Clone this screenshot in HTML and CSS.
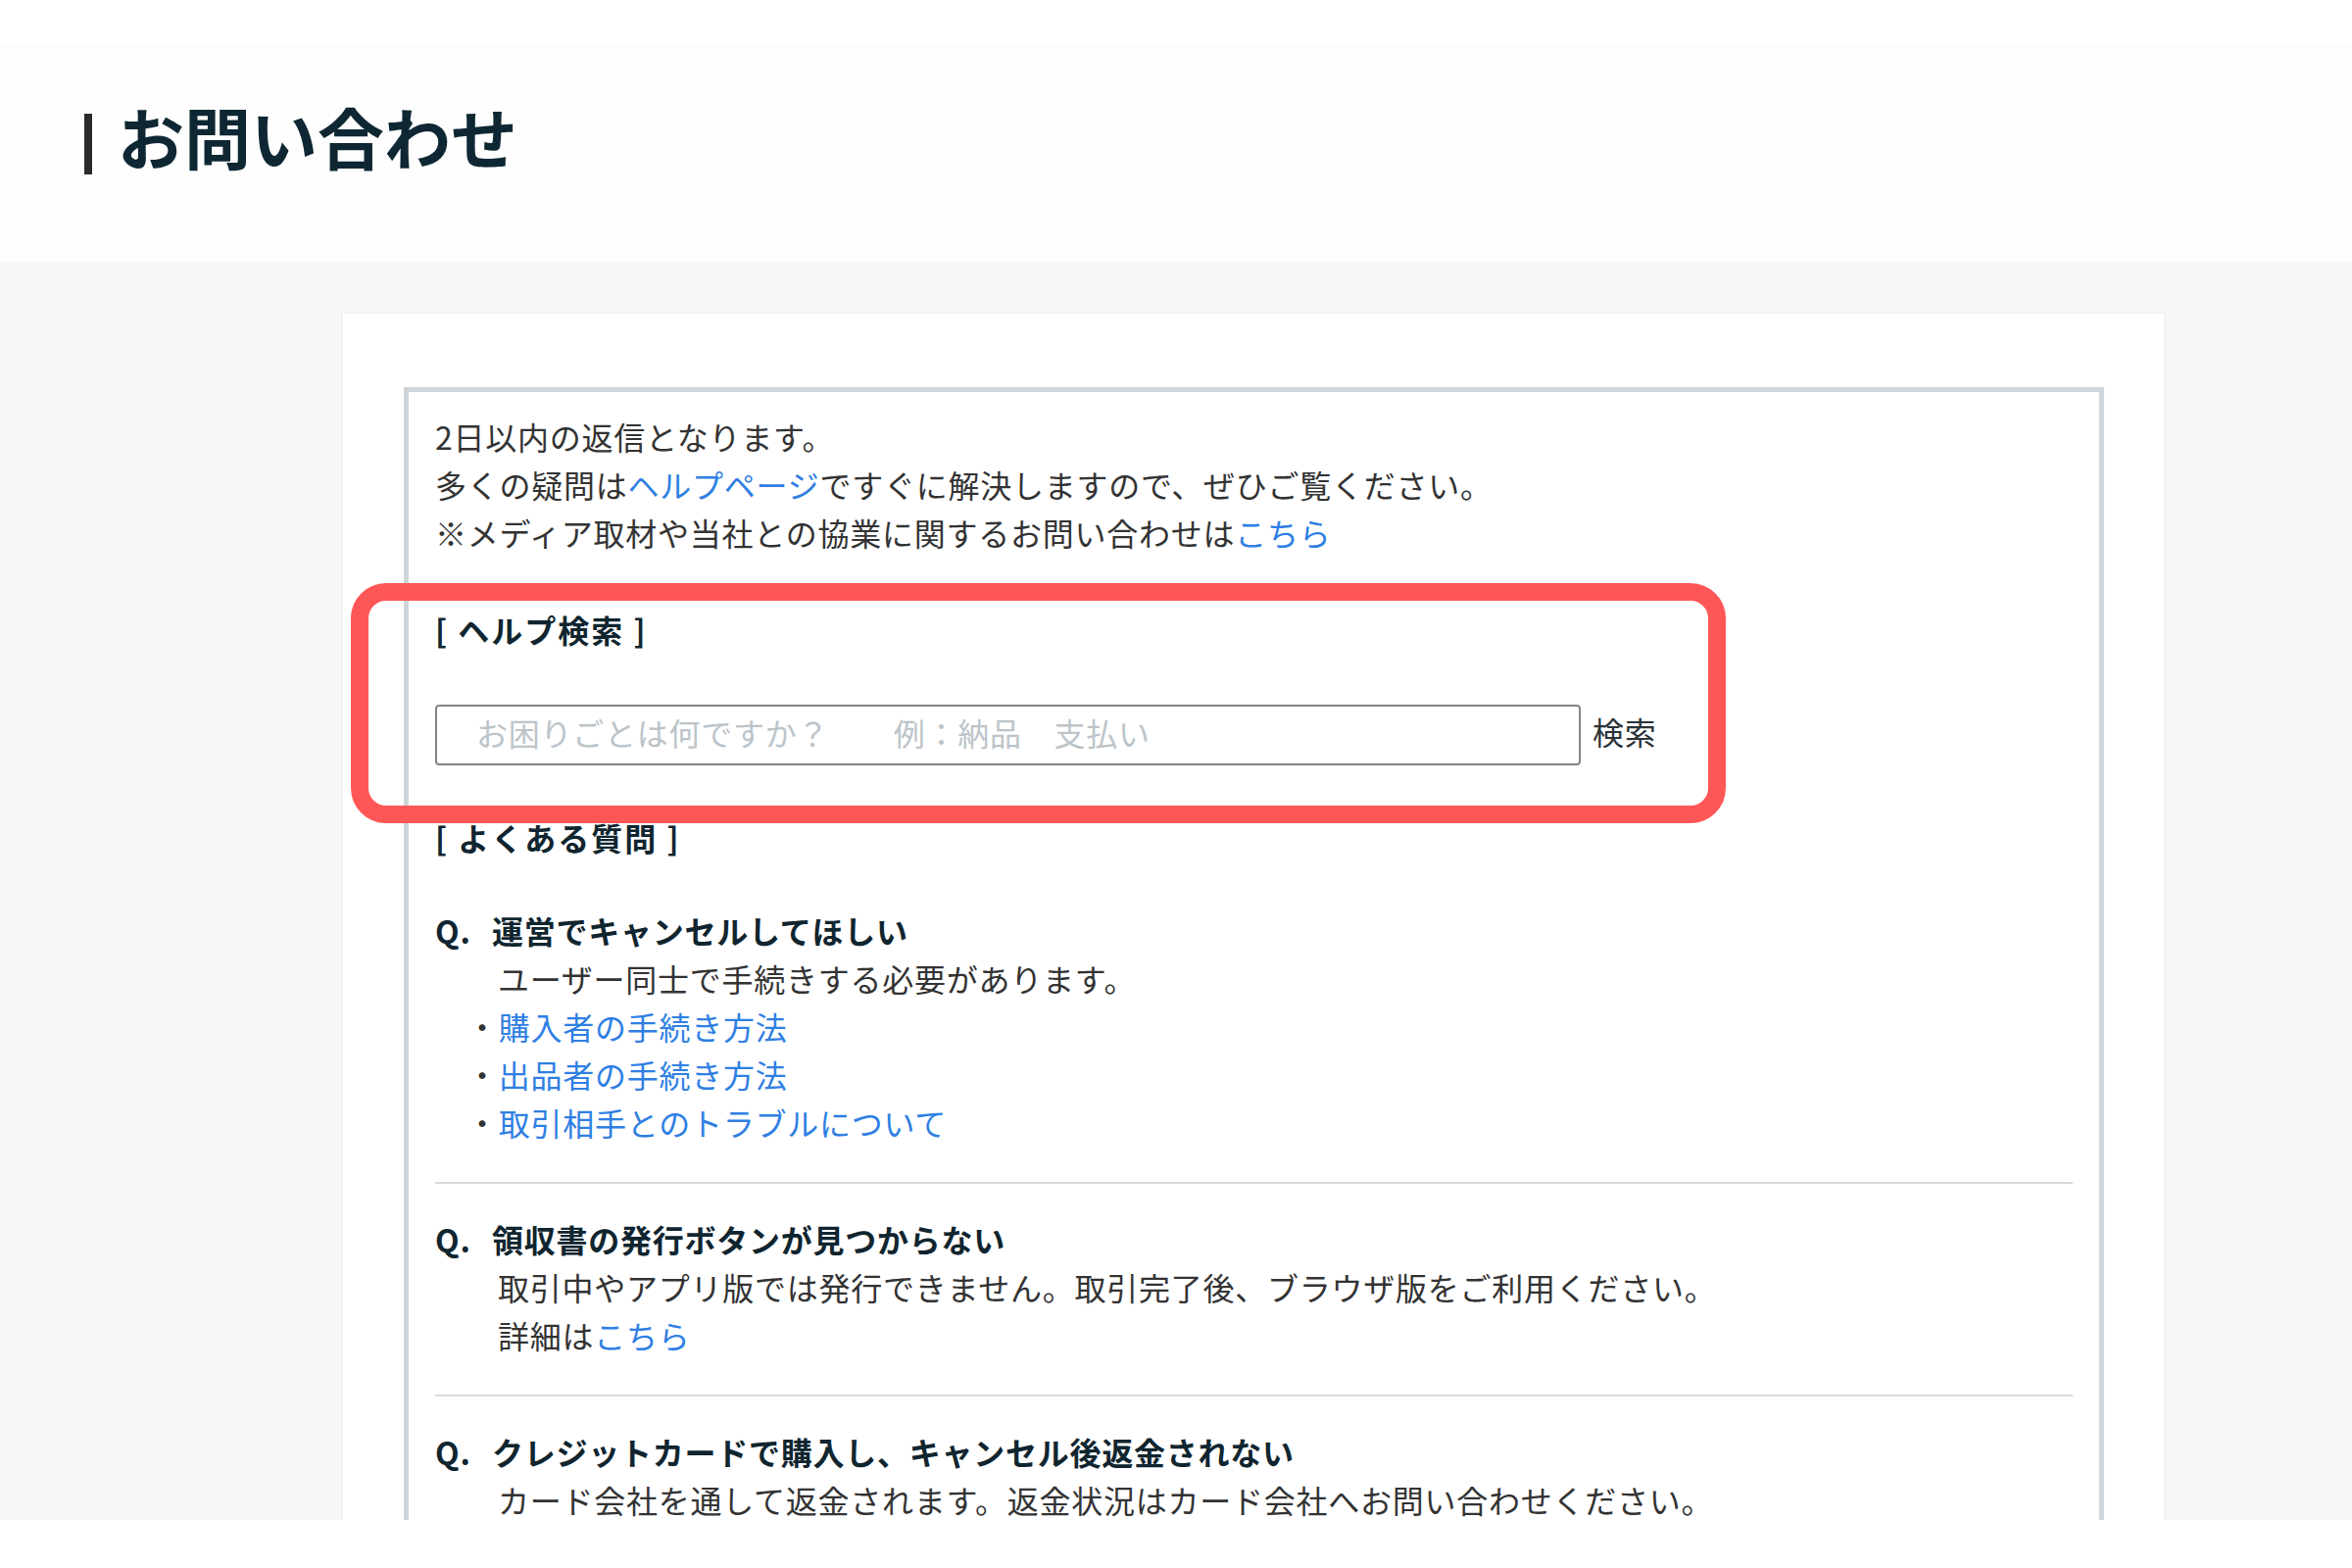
FILE: index.html
```html
<!DOCTYPE html>
<html lang="ja">
<head>
<meta charset="utf-8">
<title>お問い合わせ</title>
<link rel="stylesheet" href="styles.css">
</head>
<body>
<div class="topbar"></div>
<header class="page-header">
  <h1 class="page-title">お問い合わせ</h1>
</header>
<main class="main">
  <section class="card">
    <div class="panel">
      <p class="intro">2日以内の返信となります。<br>多くの疑問は<a href="#">ヘルプページ</a>ですぐに解決しますので、ぜひご覧ください。<br>※メディア取材や当社との協業に関するお問い合わせは<a href="#">こちら</a></p>

      <div class="help-search">
        <h2 class="section-title">[ ヘルプ検索 ]</h2>
        <form class="search-form">
          <input class="search-input" type="text" placeholder="お困りごとは何ですか？　　例：納品　支払い">
          <button class="search-btn" type="button">検索</button>
        </form>
        <div class="highlight"></div>
      </div>

      <h2 class="section-title faq-title">[ よくある質問 ]</h2>
      <div class="faq">
        <div class="faq-item">
          <p class="question"><span class="q">Q.</span>運営でキャンセルしてほしい</p>
          <p class="answer">ユーザー同士で手続きする必要があります。</p>
          <ul class="links">
            <li>・<a href="#">購入者の手続き方法</a></li>
            <li>・<a href="#">出品者の手続き方法</a></li>
            <li>・<a href="#">取引相手とのトラブルについて</a></li>
          </ul>
        </div>
        <div class="faq-item">
          <p class="question"><span class="q">Q.</span>領収書の発行ボタンが見つからない</p>
          <p class="answer">取引中やアプリ版では発行できません。取引完了後、ブラウザ版をご利用ください。<br>詳細は<a href="#">こちら</a></p>
        </div>
        <div class="faq-item">
          <p class="question"><span class="q">Q.</span>クレジットカードで購入し、キャンセル後返金されない</p>
          <p class="answer">カード会社を通して返金されます。返金状況はカード会社へお問い合わせください。</p>
        </div>
      </div>
    </div>
  </section>
</main>
</body>
</html>
```

FILE: styles.css
```css
* {
  box-sizing: border-box;
}

html, body {
  margin: 0;
  padding: 0;
  background: #ffffff;
}

body {
  font-family: "Noto Sans CJK JP", "Noto Sans", sans-serif;
  color: #333333;
  width: 2400px;
}

a {
  color: #2f7fe3;
  text-decoration: none;
}

.topbar {
  height: 48px;
  background: #ffffff;
  border-bottom: 1px solid #fafafa;
}

.page-header {
  height: 219px;
  background: #fefefe;
  padding-top: 51px;
  padding-left: 86px;
}

.page-title {
  margin: 0;
  display: flex;
  align-items: flex-start;
  font-size: 68px;
  line-height: 80px;
  font-weight: 700;
  color: #0e2733;
  letter-spacing: 0;
}

.page-title::before {
  content: "";
  display: block;
  width: 8px;
  height: 62px;
  margin-top: 17px;
  margin-right: 26px;
  background: #2b2b2b;
}

.main {
  height: 1284px;
  overflow: hidden;
  background: #f7f8fa;
  padding-top: 51px;
  padding-left: 348px;
}

.card {
  width: 1862px;
  min-height: 1400px;
  background: #ffffff;
  border: 2px solid #f0f2f4;
  padding: 75px 61px 60px 62px;
}

.panel {
  border: 5px solid #cfd5d8;
  padding: 21px 27px 40px 27px;
  font-size: 32px;
  line-height: 49px;
  letter-spacing: 0.75px;
}

.intro {
  margin: 0;
}

.help-search {
  position: relative;
  margin-top: 50px;
}

.section-title {
  margin: 0;
  font-size: 32px;
  line-height: 49px;
  font-weight: 700;
  color: #10252f;
  letter-spacing: 2px;
}

.search-form {
  display: flex;
  align-items: center;
  margin: 52px 0 0 0;
}

.search-input {
  width: 1169px;
  height: 62px;
  border: 2px solid #858585;
  border-radius: 4px;
  padding: 0 0 7px 40px;
  font: inherit;
  font-size: 32px;
  letter-spacing: 0.75px;
  color: #333333;
  background: #ffffff;
  outline: none;
}

.search-input::placeholder {
  color: #bcc4c9;
}

.search-btn {
  margin-left: 12px;
  padding: 0 0 8px 0;
  border: none;
  background: none;
  font: inherit;
  font-size: 32px;
  line-height: 49px;
  letter-spacing: 0.75px;
  color: #2a3338;
  cursor: pointer;
}

.highlight {
  position: absolute;
  left: -86px;
  top: -23px;
  width: 1403px;
  height: 245px;
  border: 18px solid #ff5757;
  border-radius: 36px;
  pointer-events: none;
}

.faq-title {
  margin-top: 49px;
}

.faq {
  margin-top: 46px;
}

.faq-item {
  padding: 32px 0 36px 0;
  border-bottom: 2px solid #d6dbdd;
}

.faq-item:first-child {
  padding-top: 0;
}

.question {
  margin: 0;
  font-weight: 700;
  color: #10252f;
}

.q {
  display: inline-block;
  width: 58px;
}

.answer {
  margin: 0;
  padding-left: 64px;
}

.links {
  list-style: none;
  margin: 0;
  padding: 0 0 0 32px;
}
```
